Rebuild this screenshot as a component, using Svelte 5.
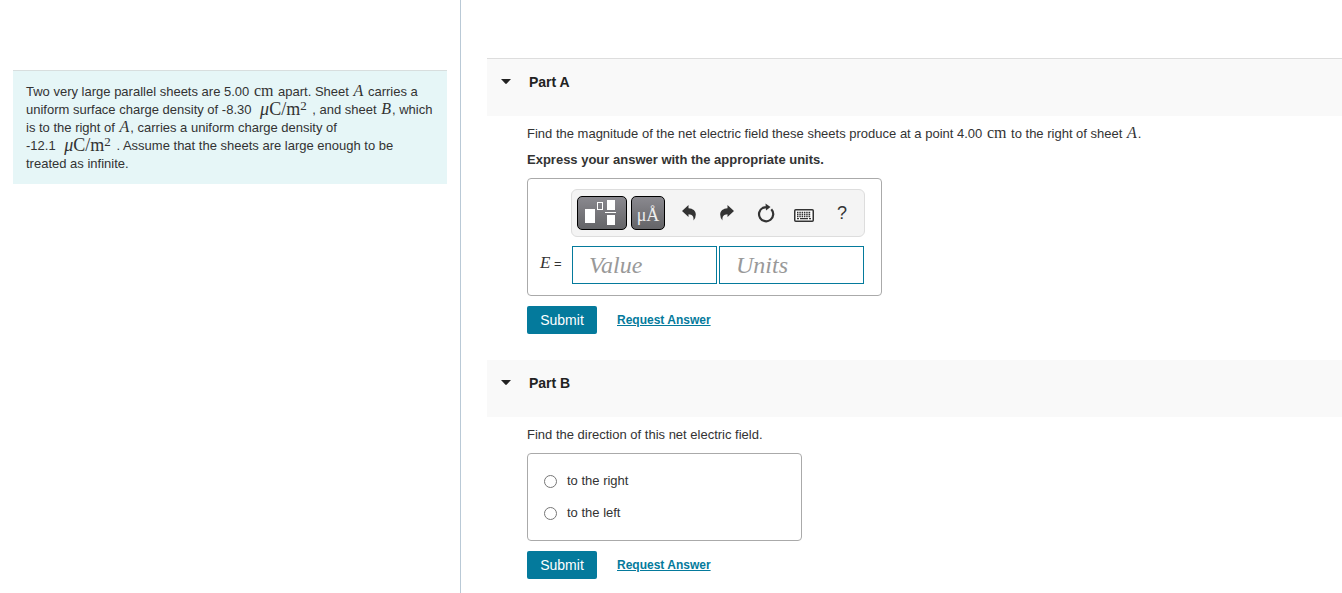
<script>
	let value = $state('');
	let units = $state('');
	let direction = $state('');
	let open = $state({ a: true, b: true });

	const choices = [
		{ id: 'right', label: 'to the right' },
		{ id: 'left', label: 'to the left' }
	];
</script>

{#snippet header(id, title)}
	<h2 class="part-header part-header-{id}">
		<button type="button" aria-expanded={open[id]} onclick={() => (open[id] = !open[id])}>
			<svg class="caret" class:closed={!open[id]} width="10" height="6" viewBox="0 0 10 6" aria-hidden="true">
				<path d="M0 0H10L5.8 4.6Q5 5.4 4.2 4.6Z" />
			</svg>
			{title}
		</button>
	</h2>
{/snippet}

{#snippet actions()}
	<div class="actions">
		<button type="submit" class="submit">Submit</button>
		<a href="#request">Request Answer</a>
	</div>
{/snippet}

<div class="page">
	<aside class="sidebar">
		<div class="problem">
			Two very large parallel sheets are 5.00 <span class="math">cm</span> apart. Sheet
			<i class="math">A</i> carries a uniform surface charge density of
			<span class="quantity">-8.30 <span class="unit"><i>μ</i>C/m<sup>2</sup></span> ,</span>
			and sheet <i class="math">B</i>, which is to the right of <i class="math">A</i>, carries a
			uniform charge density of<br />
			<span class="quantity">-12.1 <span class="unit"><i>μ</i>C/m<sup>2</sup></span> .</span>
			Assume that the sheets are large enough to be treated as infinite.
		</div>
	</aside>

	<main class="content">
		<section>
			{@render header('a', 'Part A')}
			{#if open.a}
				<form class="part-body" onsubmit={(e) => e.preventDefault()}>
					<p>
						Find the magnitude of the net electric field these sheets produce at a point 4.00
						<span class="math">cm</span> to the right of sheet <i class="math">A</i>.
					</p>
					<p class="instructions">Express your answer with the appropriate units.</p>

					<div class="answer">
						<div class="toolbar">
							<button type="button" class="dark templates" aria-label="Templates">
								<svg width="34" height="26" viewBox="0 0 34 26" aria-hidden="true">
									<rect x="0" y="9" width="10" height="14" fill="#fff" />
									<rect x="12.5" y="2.5" width="5" height="7" fill="none" stroke="#fff" />
									<rect x="22" y="0" width="8" height="10" fill="#fff" />
									<rect x="20" y="12" width="11" height="1" fill="#fff" />
									<rect x="22" y="15" width="8" height="10" fill="#fff" />
								</svg>
							</button>
							<button type="button" class="dark symbols" aria-label="Symbols">μÅ</button>
							<button type="button" class="tool" aria-label="Undo">
								<svg width="16" height="16" viewBox="0 0 16 16" aria-hidden="true">
									<path d="M1 6L7.500 0V3.300C12 3.500 14.800 6 14.800 9.500Q14.800 13 12.500 15.500C13 11.500 11.500 9.300 7.500 9.200V12Z" />
								</svg>
							</button>
							<button type="button" class="tool" aria-label="Redo">
								<svg width="16" height="16" viewBox="0 0 16 16" aria-hidden="true">
									<path d="M15 6L8.500 0V3.300C4 3.500 1.200 6 1.200 9.500Q1.200 13 3.500 15.500C3 11.500 4.500 9.300 8.500 9.200V12Z" />
								</svg>
							</button>
							<button type="button" class="tool" aria-label="Reset">
								<svg width="18" height="20" viewBox="0 0 18 20" aria-hidden="true">
									<path d="M14.300 6.300A7.100 7.100 0 1 1 5.800 4.900L9 4.100" fill="none" stroke="#333" stroke-width="2.200" />
									<path d="M8.500 0.500L13.500 4L9 7.500Z" />
								</svg>
							</button>
							<button type="button" class="tool" aria-label="Keyboard">
								<svg class="keyboard" width="20" height="13" viewBox="0 0 20 13" aria-hidden="true">
									<rect x="0.750" y="0.750" width="18.500" height="11.500" rx="1" fill="#fff" stroke="#333" stroke-width="1.500" />
									<path d="M3 3.500H17M3 5.500H17M3 7.500H17" stroke="#333" stroke-width="1.300" stroke-dasharray="1.500 0.800" />
									<path d="M3 9.700H5M6 9.700H14M15 9.700H17" stroke="#333" stroke-width="1.300" />
								</svg>
							</button>
							<button type="button" class="tool help" aria-label="Help">?</button>
						</div>
						<label class="symbol" for="value"><i>E</i> =</label>
						<div class="fields">
							<input id="value" type="text" placeholder="Value" bind:value />
							<input type="text" placeholder="Units" aria-label="Units" bind:value={units} />
						</div>
					</div>
					{@render actions()}
				</form>
			{/if}
		</section>

		<section>
			{@render header('b', 'Part B')}
			{#if open.b}
				<form class="part-body" onsubmit={(e) => e.preventDefault()}>
					<p>Find the direction of this net electric field.</p>
					<div class="choices" role="radiogroup" aria-label="Direction">
						{#each choices as choice}
							<label>
								<input type="radio" name="direction" value={choice.id} bind:group={direction} />
								{choice.label}
							</label>
						{/each}
					</div>
					{@render actions()}
				</form>
			{/if}
		</section>
	</main>
</div>

<style>
	:global(body) {
		background: #fff;
		color: #333;
		font-family: 'Liberation Sans', Arial, sans-serif;
		font-size: 13px;
		line-height: 18px;
	}

	.page {
		display: grid;
		grid-template-columns: 461fr 881fr;
		min-height: 100vh;
	}

	.sidebar {
		box-sizing: border-box;
		padding: 70px 13px 0;
		border-right: 1px solid #b9c9d6;
	}

	.problem {
		padding: 12px 13px 11px;
		border-top: 1px solid #d8dede;
		background: #e6f6f7;
	}

	.math,
	.unit {
		margin: 0 1px;
		font-family: 'Liberation Serif', 'Times New Roman', serif;
		font-size: 16px;
		line-height: 14px;
	}

	.quantity {
		white-space: nowrap;
	}

	.unit {
		margin: 0 2px 0 5px;
		font-size: 18px;
		vertical-align: -1px;
	}

	.unit sup {
		font-size: 13px;
		line-height: 8px;
		vertical-align: 5px;
	}

	.content {
		min-width: 0;
		padding: 58px 0 0 26px;
	}

	.part-header {
		display: flex;
		align-items: flex-start;
		box-sizing: border-box;
		height: 57px;
		margin: 0;
		padding: 14px;
		background: #f9f9f9;
	}

	.part-header-a {
		height: 58px;
		border-top: 1px solid #ddd;
	}

	.part-header button {
		display: flex;
		align-items: center;
		gap: 18px;
		padding: 0;
		border: 0;
		background: none;
		color: #222;
		font: bold 14px/18px 'Liberation Sans', Arial, sans-serif;
		cursor: pointer;
	}

	.caret {
		fill: #222;
	}

	.caret.closed {
		transform: rotate(-90deg);
	}

	.part-body {
		padding: 9px 16px 26px 40px;
	}

	p {
		margin: 0 0 9px;
	}

	.instructions {
		margin-top: -1px;
		font-weight: bold;
	}

	.answer {
		display: grid;
		grid-template-columns: 32px 294px;
		row-gap: 9px;
		align-items: center;
		box-sizing: border-box;
		width: fit-content;
		padding: 10px 16px 11px 11px;
		border: 1px solid #aaa;
		border-radius: 4px;
	}

	.toolbar {
		grid-column: 2;
		display: flex;
		align-items: center;
		box-sizing: border-box;
		height: 48px;
		padding: 0 3px 0 5px;
		border: 1px solid #ddd;
		border-radius: 6px;
		background: #f4f4f4;
	}

	.dark {
		display: flex;
		align-items: center;
		justify-content: center;
		box-sizing: border-box;
		height: 34px;
		margin-right: 4px;
		padding: 0;
		border: 1px solid #000;
		border-radius: 5px;
		background: linear-gradient(#8a898f, #646467);
		color: #eee;
		font: 18px/20px 'Liberation Serif', 'Times New Roman', serif;
	}

	.templates {
		width: 50px;
	}

	.symbols {
		width: 34px;
		margin-right: 5px;
		padding-top: 4px;
	}

	.tool {
		flex: 1;
		display: flex;
		align-items: center;
		justify-content: center;
		height: 34px;
		padding: 0;
		border: 0;
		background: none;
		color: #333;
		fill: #333;
	}

	.keyboard {
		padding-top: 4px;
	}

	.help {
		font: 18px/20px 'Liberation Sans', Arial, sans-serif;
	}

	.symbol {
		padding: 0 0 4px 1px;
	}

	.symbol i {
		font-family: 'Liberation Serif', 'Times New Roman', serif;
		font-size: 17px;
	}

	.fields {
		display: flex;
		gap: 2px;
		margin: 0 1px;
	}

	.fields input {
		flex: 1;
		box-sizing: border-box;
		min-width: 0;
		height: 38px;
		padding: 0 16px;
		border: 1px solid #047a9c;
		background: #fff;
		font: italic 24px/30px 'Liberation Serif', 'Times New Roman', serif;
	}

	.fields input::placeholder {
		color: #999;
	}

	.actions {
		display: flex;
		align-items: center;
		gap: 20px;
		margin-top: 10px;
	}

	.submit {
		width: 70px;
		height: 28px;
		padding: 0;
		border: 0;
		border-radius: 2px;
		background: #047a9c;
		color: #fff;
		font: 14px/18px 'Liberation Sans', Arial, sans-serif;
	}

	.actions a {
		color: #047a9c;
		font-size: 12px;
		font-weight: bold;
	}

	.choices {
		display: grid;
		gap: 14px;
		box-sizing: border-box;
		width: 275px;
		max-width: 100%;
		padding: 18px 16px;
		border: 1px solid #aaa;
		border-radius: 4px;
	}

	.choices label {
		display: flex;
		align-items: center;
		gap: 10px;
	}

	.choices input {
		width: 13px;
		height: 13px;
		margin: 0;
	}
</style>
